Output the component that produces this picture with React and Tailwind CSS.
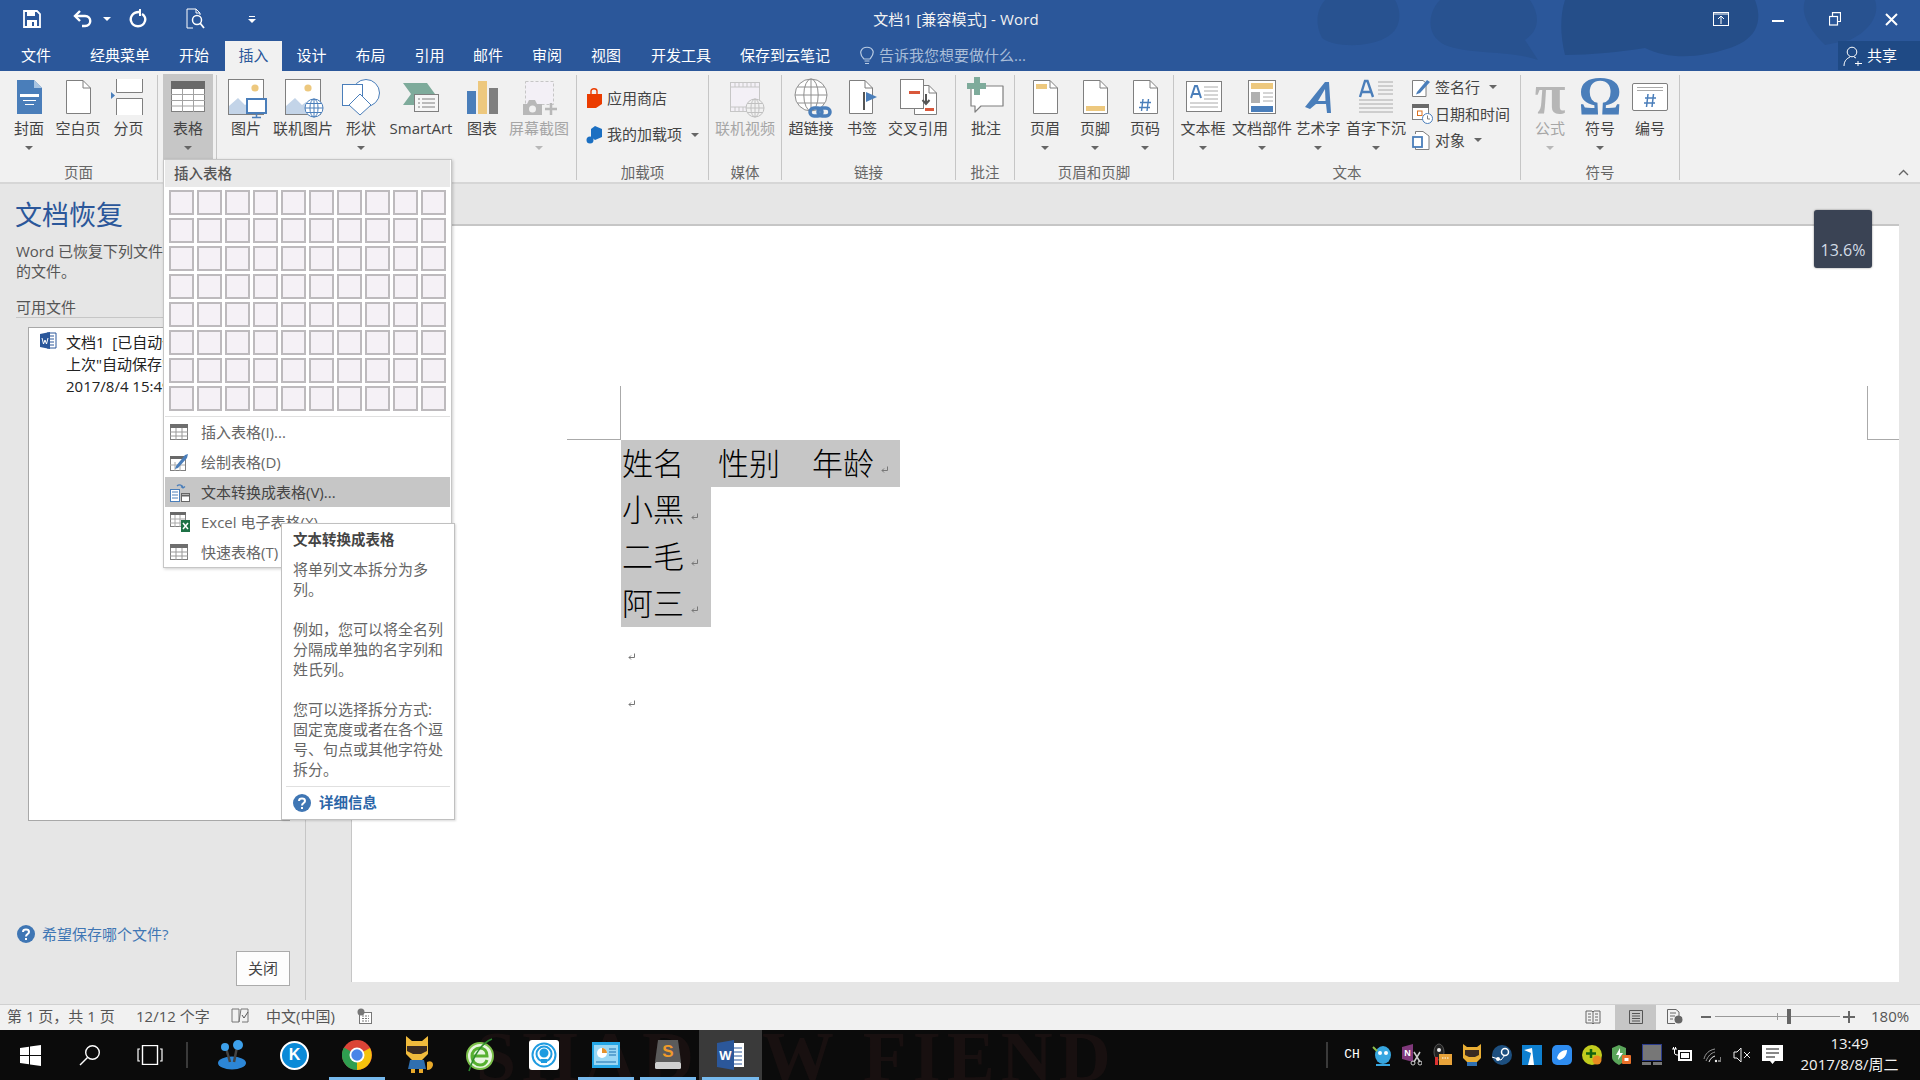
import React from "react";

const B = "#4a7eba", G = "#7f7f7f", Y = "#edc87e", T = "#7eab9b", R = "#d9583b";

function Ico({ w = 44, h = 42, children, className = "" }) {
  return <svg width={w} height={h} viewBox={`0 0 ${w} ${h}`} className={`shrink-0 overflow-visible ${className}`}>{children}</svg>;
}
const Page = ({ x = 10, y = 3, w = 25, h = 34, fill = "#fff", s = G }) => (
  <g>
    <path d={`M${x + .5} ${y + .5}H${x + w - 8}L${x + w - .5} ${y + 8}V${y + h - .5}H${x + .5}Z`} fill={fill} stroke={s} />
    <path d={`M${x + w - 8} ${y + .5}V${y + 8}H${x + w - .5}`} fill="none" stroke={s} />
  </g>
);
const Globe = ({ cx, cy, r, c = B, f = "#fff" }) => (
  <g fill={f} stroke={c} strokeWidth="1">
    <circle cx={cx} cy={cy} r={r} />
    <ellipse cx={cx} cy={cy} rx={r * .45} ry={r} fill="none" />
    <path d={`M${cx - r} ${cy}H${cx + r}M${cx} ${cy - r}V${cy + r}M${cx - r * .85} ${cy - r * .5}H${cx + r * .85}M${cx - r * .85} ${cy + r * .5}H${cx + r * .85}`} fill="none" />
  </g>
);
const TableSm = ({ w = 18, h = 16, dark = "#6e6e6e" }) => (
  <svg width={w} height={h} viewBox="0 0 18 16" className="shrink-0">
    <rect x=".5" y=".5" width="17" height="15" fill="#fff" stroke={G} />
    <rect x="0" y="0" width="18" height="4" fill={dark} />
    <path d="M6 4V16M12 4V16M0 8H18M0 12H18" stroke="#999" />
  </svg>
);

const I = {
  cover: <Ico><path d="M10 3H27L35 11V37H10Z" fill={B} /><path d="M27 3V11H35Z" fill="#a8c4e2" /><path d="M13 17H32V20H13ZM16 23H29V24H16ZM18 27H27V28H18Z" fill="#fff" /></Ico>,
  blank: <Ico><Page /></Ico>,
  pagebreak: <Ico><path d="M9.5 2V15.5H35.5V2M9.5 38V21.5H35.5V38" fill="#fff" stroke={G} /><path d="M4 15V22L8 18.5Z" fill={B} /></Ico>,
  table: <Ico><rect x="5.5" y="4.5" width="33" height="30" fill="#fff" stroke={G} /><rect x="5" y="4" width="34" height="8" fill="#696969" /><path d="M16.5 12V35M27.5 12V35M5 17.5H39M5 23.5H39M5 29H39" stroke="#a2a2a2" /></Ico>,
  pic: <Ico><rect x="4.5" y="2.5" width="35" height="35" fill="#fff" stroke={G} /><circle cx="31" cy="11" r="3.6" fill={Y} /><path d="M5 37V29L14 21L21 28L25 25V37Z" fill="#c3d4e8" /><rect x="23" y="22" width="19" height="14" fill="#fff" stroke={B} strokeWidth="2" /><path d="M32.5 36V40M28 40.5H37" stroke={B} strokeWidth="1.5" /></Ico>,
  online: <Ico><rect x="4.5" y="2.5" width="35" height="35" fill="#fff" stroke={G} /><circle cx="27" cy="11" r="3.6" fill={Y} /><path d="M5 37V29L14 21L21 28L25 25V37Z" fill="#c3d4e8" /><Globe cx={33} cy={31} r={9} /></Ico>,
  shapes: <Ico><circle cx="27" cy="16" r="13.5" fill="#fff" stroke={B} /><rect x="3.5" y="7.5" width="20" height="21" fill="#fff" stroke={B} /><path d="M21 17L32 28L21 38L10 28Z" fill="#fff" stroke={B} /></Ico>,
  smart: <Ico><path d="M4 6H28L36 17L28 28H4L12 17Z" fill={T} /><rect x="15.5" y="17.5" width="24" height="17" fill="#f6f6f6" stroke={G} /><path d="M19 22H21M23 22H36M19 26H21M23 26H36M19 30H21M23 30H36" stroke={G} /></Ico>,
  chart: <Ico><rect x="7" y="14" width="9" height="23" fill={B} /><rect x="18" y="4" width="9" height="33" fill={Y} /><rect x="29" y="11" width="9" height="26" fill={G} /></Ico>,
  shot: <Ico><rect x="8.5" y="4.5" width="28" height="23" fill="#f3f0f6" stroke="#c6c6c6" strokeDasharray="3 2" /><path d="M6 27H10L12 23H18L20 27H25V38H6Z" fill="#b8b8b8" /><circle cx="15.5" cy="32" r="3.5" fill="#f1f1f1" /><path d="M34 26V38M28 32H40" stroke="#b8b8b8" strokeWidth="2.5" /></Ico>,
  video: <Ico><rect x="7.5" y="5.5" width="29" height="29" fill="#f3f0f6" stroke="#c6c6c6" /><path d="M8 10H36M8 30H36M12 6V10M16 6V10M20 6V10M24 6V10M28 6V10M32 6V10M12 30V34M16 30V34M20 30V34" stroke="#c6c6c6" /><Globe cx={32} cy={31} r={9} c="#c0c0c0" f="#f1f1f1" /></Ico>,
  link: <Ico><Globe cx={22} cy={18} r={16} c="#909090" /><g fill="none" stroke={B} strokeWidth="3.5"><rect x="21" y="31" width="12" height="8" rx="4" /><rect x="29" y="31" width="12" height="8" rx="4" /></g></Ico>,
  bookmark: <Ico><Page x={9} y={3} w={24} h={34} /><rect x="23" y="15" width="2" height="18" fill="#555" /><path d="M26 15V25L37 20Z" fill={B} /></Ico>,
  cross: <Ico><Page x={18} y={8} w={23} h={30} /><rect x="4.5" y="2.5" width="23" height="29" fill="#fff" stroke={G} /><rect x="13" y="14" width="11" height="3" fill={R} /><rect x="29" y="31" width="9" height="3" fill={R} /><path d="M30 17V26M26.5 23L30 27L33.5 23" fill="none" stroke="#555" strokeWidth="2" /></Ico>,
  comment: <Ico><path d="M7 9H39V29H17L11 35V29H7Z" fill="#fff" stroke={G} strokeWidth="1.2" strokeLinejoin="round" /><path d="M10 0H16V6H22V12H16V18H10V12H3V6H10Z" fill={T} /></Ico>,
  header: <Ico><Page /><rect x="13" y="7" width="11" height="5" fill={Y} /></Ico>,
  footer: <Ico><Page /><rect x="13" y="29" width="19" height="5" fill={Y} /></Ico>,
  pagenum: <Ico><Page /><path d="M20 22L18.5 34M25.500 22L24 34M17 25.500H28M16 30.500H27" stroke={B} strokeWidth="1.400" fill="none" /></Ico>,
  textbox: <Ico><rect x="5.500" y="4.500" width="35" height="30" fill="#fff" stroke={G} /><path d="M10 21L14 9H16L20 21M11.500 17H18.500" fill="none" stroke={B} strokeWidth="2" /><path d="M23 10H37M23 14H37M23 18H37M23 22H37M9 26H37M9 30H37" stroke="#aaa" /></Ico>,
  parts: <Ico><rect x="8.500" y="3.500" width="27" height="33" fill="#fff" stroke={G} /><rect x="11" y="6" width="22" height="6" fill={Y} /><rect x="11" y="15" width="9" height="11" fill="#b0b0b0" /><path d="M23 16H33M23 20H33M23 24H33" stroke="#aaa" /><rect x="11" y="29" width="22" height="6" fill={B} /></Ico>,
  wordart: <Ico><path d="M9 30L29 5H33L35 36H31L30 27H20L14 32Z" fill={B} /><path d="M22 24H29.500L29 12Z" fill="#f1f1f1" /></Ico>,
  dropcap: <Ico><path d="M6 20L11 4H13.500L19 20M8 15H17" fill="none" stroke={B} strokeWidth="2.400" /><path d="M24 5H39M24 9H39M24 13H39M24 17H39M5 23H39M5 27H39M5 31H39M5 35H39" stroke="#aaa" /></Ico>,
  pi: <Ico><text x="22" y="36" textAnchor="middle" fontSize="56" fontWeight="700" fontFamily="Liberation Serif" fill="#b6b6b6">π</text></Ico>,
  omega: <Ico><text x="22" y="37" textAnchor="middle" fontSize="54" fontWeight="700" fontFamily="Liberation Serif" fill={B}>Ω</text></Ico>,
  numbering: <Ico><rect x="4.500" y="6.500" width="35" height="27" rx="1.500" fill="#fff" stroke={G} /><path d="M9 10.500H35M9 13.500H35" stroke="#aaa" /><path d="M20 17L18.500 30M25.500 17L24 30M17 21H28M16 26H27" stroke={B} strokeWidth="1.500" fill="none" /></Ico>,
};

const Chev = ({ c = "#666" }) => <span className="block w-0 h-0 border-x-[4px] border-x-transparent border-t-[4px]" style={{ borderTopColor: c }} />;

function Big({ w, icon, label, caret, off, active }) {
  return (
    <div className={`${w} flex flex-col items-center shrink-0 ${active ? "bg-[#c6c6c6] h-[85px] pt-[3px] -mt-[1px]" : "h-[81px] pt-[2px]"}`}>
      <div className="h-[42px] flex items-center justify-center">{icon}</div>
      <div className={`h-[20px] -mt-[1px] leading-[20px] text-[15px] whitespace-nowrap ${off ? "text-[#a6a6a6]" : "text-[#444]"}`}>{label}</div>
      {caret && <div className="h-[16px] mt-[2px] flex items-center justify-center"><Chev c={off ? "#b8b8b8" : "#666"} /></div>}
    </div>
  );
}

function Group({ w, pl = "", label, children }) {
  return (
    <div className={`${w} h-[105px] my-[4px] border-r border-[#c6c6c6] flex flex-col shrink-0`}>
      <div className={`flex h-[90px] ${pl}`}>{children}</div>
      <div className="h-[15px] leading-[16px] text-[14.500px] text-center text-[#666] whitespace-nowrap">{label}</div>
    </div>
  );
}

function Small({ icon, label, caret, ml }) {
  return (
    <div className="h-[26.500px] flex items-center">
      <div className="w-[23px] flex justify-start">{icon}</div>
      <span className="text-[15px] leading-[20px] text-[#444] whitespace-nowrap">{label}</span>
      {caret && <span className={ml}><Chev /></span>}
    </div>
  );
}

function Tab({ w, label, active, extra = "" }) {
  return <div className={`${w} h-[30px] leading-[29px] text-center text-[15px] whitespace-nowrap shrink-0 ${extra} ${active ? "bg-[#f1f1f1] text-[#2b579a]" : "text-white"}`}>{label}</div>;
}

function MenuItem({ icon, label, hi }) {
  return (
    <div className={`h-[30px] flex items-center ${hi ? "bg-[#c6c6c6] text-[#444]" : "text-[#666]"}`}>
      <div className="w-[36px] pl-[5px] flex">{icon}</div>
      <span className="text-[15px] whitespace-nowrap leading-[20px]">{label}</span>
    </div>
  );
}

const Ret = ({ className = "" }) => (
  <svg width="8" height="8" viewBox="0 0 8 8" className={className}><path d="M6.500 .5V4.500H1M3 2.500L1 4.500L3 6.500" fill="none" stroke="#777" /></svg>
);

const Help = () => (
  <svg width="18" height="18" viewBox="0 0 18 18" className="shrink-0"><circle cx="9" cy="9" r="9" fill="#3f76b4" /><path d="M6 7C6 3.800 12 3.800 12 7C12 9 9 9 9 11.500" fill="none" stroke="#fff" strokeWidth="2" /><rect x="8" y="13" width="2" height="2" fill="#fff" /></svg>
);

const hdr = ["将单列文本拆分为多", "列。"];
const rows = [0, 1, 2, 3, 4, 5, 6, 7];
const cols = [0, 1, 2, 3, 4, 5, 6, 7, 8, 9];

function Tb({ active, on, children }) {
  return (
    <div className={`relative w-[62.300px] h-[50px] flex items-center justify-center shrink-0 ${active ? "bg-[#3a3a3a]" : ""}`}>
      {children}
      {on && <div className="absolute bottom-0 left-[5%] right-[5%] h-[3px] bg-[#76b9ed]" />}
    </div>
  );
}
const Tr = ({ children, w = "w-[30px]" }) => <div className={`${w} flex items-center justify-center shrink-0`}>{children}</div>;

export default function App() {
  return (
    <div className="relative w-[1920px] h-[1080px] overflow-hidden flex flex-col bg-[#e6e6e6] font-['Open_Sans','Noto_Sans_CJK_SC',sans-serif]">
      {/* Title and tabs */}
      <div className="relative h-[71px] bg-[#2b579a] shrink-0">
        <svg className="absolute left-0 top-0" width="1920" height="65" viewBox="0 0 1920 65">
          <g fill="#285290">
            <path d="M1325 0H1395C1402 12 1402 30 1385 38C1370 47 1335 48 1322 38C1315 25 1316 10 1325 0Z" />
            <path d="M1440 0H1530C1540 15 1540 30 1525 40L1538 60C1510 50 1470 55 1445 45C1425 35 1428 12 1440 0Z" />
            <path d="M1565 0H1755C1762 18 1760 38 1730 48C1700 58 1670 60 1645 48C1620 52 1590 55 1565 55C1560 35 1560 15 1565 0Z" fill="#254e89" />
            <path d="M1805 0H1875C1880 15 1870 30 1850 40L1825 45C1810 30 1800 15 1805 0Z" />
          </g>
        </svg>
        <div className="relative h-[41px] flex items-center pb-[3px]">
          <div className="w-[270px] relative h-full flex items-center shrink-0 text-white">
            <div className="w-[66px] flex justify-center">
              <svg width="18" height="18" viewBox="0 0 18 18"><path d="M1 1H14L17 4V17H1Z" fill="none" stroke="#fff" strokeWidth="1.800" /><rect x="4" y="1" width="8" height="5" fill="#fff" /><rect x="4" y="10" width="10" height="7" fill="#fff" /><rect x="9" y="12" width="2" height="4" fill="#2b579a" /></svg>
            </div>
            <div className="w-[40px] flex justify-center">
              <svg width="20" height="18" viewBox="0 0 20 18"><path d="M3 6H12C19 6 19 16 12 16H9" fill="none" stroke="#fff" strokeWidth="2.400" /><path d="M7 1L2 6L7 11" fill="none" stroke="#fff" strokeWidth="2.400" /></svg>
            </div>
            <div className="w-[10px] flex justify-center"><Chev c="#fff" /></div>
            <div className="w-[42px] flex justify-center ml-[7px]">
              <svg width="18" height="20" viewBox="0 0 18 20"><path d="M10 3C3 3 1 9 2 12C4 19 14 19 16 12C17 9 15 6 13 5" fill="none" stroke="#fff" strokeWidth="2.400" /><path d="M12 0V7H10V0Z" fill="#fff" /></svg>
            </div>
            <div className="w-[78px] flex justify-center">
              <svg width="20" height="22" viewBox="0 0 20 22"><path d="M7 20H1V1H10L14 5V7" fill="none" stroke="#fff" /><path d="M10 1V5H14" fill="none" stroke="#fff" /><circle cx="11" cy="12" r="4.500" fill="none" stroke="#fff" strokeWidth="1.500" /><path d="M14 15L18 20" stroke="#fff" strokeWidth="1.800" /></svg>
            </div>
            <div className="w-[38px] flex flex-col items-center gap-[2px]"><div className="w-[6px] h-[1px] bg-white" /><Chev c="#fff" /></div>
          </div>
          <div className="w-[1372px] text-center text-[15px] leading-[20px] tracking-[0.15px] text-[#f2f2f2] shrink-0 whitespace-nowrap">文档1 [兼容模式] - Word</div>
          <div className="absolute right-0 top-0 h-[38px] flex">
            <div className="w-[57px] flex items-center justify-center"><svg width="16" height="14" viewBox="0 0 16 14"><rect x=".5" y=".5" width="15" height="13" fill="none" stroke="#fff" /><path d="M1 2H15M8 12V5M5 7L8 4L11 7" fill="none" stroke="#fff" /></svg></div>
            <div className="w-[57px] flex items-center justify-center"><div className="w-[12px] h-[2px] bg-white mt-[4px]" /></div>
            <div className="w-[57px] flex items-center justify-center"><svg width="12" height="14" viewBox="0 0 12 14"><rect x=".5" y="4.500" width="8" height="8.500" fill="#2b579a" stroke="#fff" strokeWidth="1.200" /><path d="M3.500 4V.7H11.500V9.500H9" fill="none" stroke="#fff" strokeWidth="1.200" /></svg></div>
            <div className="w-[57px] flex items-center justify-center"><svg width="13" height="13" viewBox="0 0 13 13"><path d="M1 1L12 12M12 1L1 12" stroke="#fff" strokeWidth="2" /></svg></div>
          </div>
        </div>
        <div className="relative h-[30px] flex">
          <Tab w="w-[72px]" label="文件" />
          <Tab w="w-[96px]" label="经典菜单" />
          <Tab w="w-[57px]" extra="pr-[5px]" label="开始" />
          <Tab w="w-[57px]" label="插入" active />
          <Tab w="w-[59px]" label="设计" />
          <Tab w="w-[59px]" label="布局" />
          <Tab w="w-[59px]" label="引用" />
          <Tab w="w-[58px]" label="邮件" />
          <Tab w="w-[60px]" label="审阅" />
          <Tab w="w-[58px]" label="视图" />
          <Tab w="w-[92px]" label="开发工具" />
          <Tab w="w-[116px]" label="保存到云笔记" />
          <div className="flex items-center pb-[1px] ml-[17px] text-[15px] text-[#a9bdd8] whitespace-nowrap">
            <svg width="14" height="20" viewBox="0 0 14 20" className="mr-[5px]"><path d="M4 13C1 10 0 8 1 5C3 0 11 0 13 5C14 8 12 10 10 13ZM4.500 15H9.500M5 17.500H9" fill="none" stroke="#b9cbe2" strokeWidth="1.200" /></svg>
            告诉我您想要做什么...
          </div>
          <div className="absolute right-0 top-0 w-[82px] h-[29px] bg-[#1f4a85] flex items-center text-white text-[15px]">
            <svg width="20" height="20" viewBox="0 0 20 20" className="ml-[5px] mr-[4px]"><circle cx="9" cy="6" r="4.800" fill="none" stroke="#fff" /><path d="M1 20C1 14 5 12 7 11M11 11L13 12M15 15V20M12 17.500H19" fill="none" stroke="#fff" /></svg>
            共享
          </div>
        </div>
      </div>

      {/* Ribbon */}
      <div className="relative h-[113px] bg-[#f1f1f1] border-b-2 border-[#d6d6d6] flex shrink-0">
        <Group w="w-[158px]" pl="pl-[5px]" label="页面">
          <Big w="w-[48px]" icon={I.cover} label="封面" caret />
          <Big w="w-[50px]" icon={I.blank} label="空白页" />
          <Big w="w-[51px]" icon={I.pagebreak} label="分页" />
        </Group>
        <div className="w-[59px] h-[105px] my-[4px] border-r border-[#c6c6c6] flex shrink-0 pl-[5px]">
          <Big w="w-[50px]" icon={I.table} label="表格" caret active />
        </div>
        <Group w="w-[360px]" pl="pl-[5px]" label="">
          <Big w="w-[48px]" icon={I.pic} label="图片" />
          <Big w="w-[66px]" icon={I.online} label="联机图片" />
          <Big w="w-[50px]" icon={I.shapes} label="形状" caret />
          <Big w="w-[70px]" icon={I.smart} label="SmartArt" />
          <Big w="w-[52px]" icon={I.chart} label="图表" />
          <Big w="w-[62px]" icon={I.shot} label="屏幕截图" caret off />
        </Group>
        <Group w="w-[132px]" label="加载项">
          <div className="flex flex-col pt-[5px] pl-[9px]">
            <div className="h-[36px] flex items-center text-[15px] text-[#444] whitespace-nowrap">
              <svg width="17" height="20" viewBox="0 0 17 20" className="mr-[4px]"><path d="M1 6H16V16L10 20H1Z" fill="#eb3c00" /><path d="M5 6V3C5 0 11 0 11 3V6" fill="none" stroke="#eb3c00" strokeWidth="1.400" /></svg>
              应用商店
            </div>
            <div className="h-[37px] flex items-center text-[15px] text-[#444] whitespace-nowrap">
              <svg width="17" height="18" viewBox="0 0 17 18" className="mr-[4px]"><path d="M9 0L16 3V11L9 14L5 11V3Z" fill="#1b6fc2" /><circle cx="4" cy="14" r="3.500" fill="#1b6fc2" /></svg>
              我的加载项
              <span className="ml-[9px]"><Chev /></span>
            </div>
          </div>
        </Group>
        <Group w="w-[73px]" pl="pl-[3px]" label="媒体">
          <Big w="w-[66px]" icon={I.video} label="联机视频" off />
        </Group>
        <Group w="w-[174px]" label="链接">
          <Big w="w-[58px]" icon={I.link} label="超链接" />
          <Big w="w-[44px]" icon={I.bookmark} label="书签" />
          <Big w="w-[68px]" icon={I.cross} label="交叉引用" />
        </Group>
        <Group w="w-[59px]" pl="pl-[2px]" label="批注">
          <Big w="w-[56px]" icon={I.comment} label="批注" />
        </Group>
        <Group w="w-[159px]" pl="pl-[5px]" label="页眉和页脚">
          <Big w="w-[50px]" icon={I.header} label="页眉" caret />
          <Big w="w-[50px]" icon={I.footer} label="页脚" caret />
          <Big w="w-[50px]" icon={I.pagenum} label="页码" caret />
        </Group>
        <Group w="w-[347px]" pl="pl-[1px]" label="文本">
          <Big w="w-[56px]" icon={I.textbox} label="文本框" caret />
          <Big w="w-[62px]" icon={I.parts} label="文档部件" caret />
          <Big w="w-[50px]" icon={I.wordart} label="艺术字" caret />
          <Big w="w-[66px]" icon={I.dropcap} label="首字下沉" caret />
          <div className="flex flex-col pl-[3px] -mt-[1px]">
            <Small label="签名行" caret ml="ml-[9px]" icon={<svg width="19" height="19" viewBox="0 0 19 19"><path d="M.5 2.500H11L14 5V18.500H.5Z" fill="#fff" stroke={G} /><path d="M5 14L15 2L18 4L8 15L4 16.500Z" fill={B} /></svg>} />
            <Small label="日期和时间" icon={<svg width="21" height="20" viewBox="0 0 21 20"><rect x=".5" y=".5" width="16" height="15" fill="#fff" stroke={G} /><rect width="17" height="4" fill="#696969" /><rect x="5.500" y="7" width="4.500" height="4.500" fill="none" stroke="#d9701f" /><circle cx="15.500" cy="14.500" r="5" fill="#fff" stroke={B} /><path d="M15.500 11.500V15H18" fill="none" stroke={G} /></svg>} />
            <Small label="对象" caret ml="ml-[9px]" icon={<svg width="18" height="19" viewBox="0 0 18 19"><path d="M3.500 3V.5H11L17 5V18.500H3.500V16" fill="#fff" stroke={G} /><rect x="1" y="6" width="9" height="10" fill="#fff" stroke={B} strokeWidth="1.800" /></svg>} />
          </div>
        </Group>
        <Group w="w-[159px]" pl="pl-[4px]" label="符号">
          <Big w="w-[50px]" icon={I.pi} label="公式" caret off />
          <Big w="w-[50px]" icon={I.omega} label="符号" caret />
          <Big w="w-[50px]" icon={I.numbering} label="编号" />
        </Group>
        <div className="flex-1 flex items-end justify-end pr-[11px] pb-[6px]">
          <svg width="11" height="7" viewBox="0 0 11 7"><path d="M1 6L5.500 1.500L10 6" fill="none" stroke="#666" strokeWidth="1.400" /></svg>
        </div>
      </div>

      {/* Main */}
      <div className="relative flex h-[820px] shrink-0 bg-[#e6e6e6]">
        <div className="w-[306px] h-[816px] border-r border-[#c6c6c6] pt-[11px] shrink-0">
          <div className="pl-[15px] h-[40px] leading-[40px] text-[27px] text-[#2b579a] whitespace-nowrap">文档恢复</div>
          <div className="pl-[16px] mt-[6px] text-[15px] leading-[20px] text-[#555] whitespace-nowrap">Word 已恢复下列文件，您可以保存</div>
          <div className="pl-[16px] text-[15px] leading-[20px] text-[#555] whitespace-nowrap">的文件。</div>
          <div className="ml-[16px] mr-[10px] mt-[16px] h-[21px] leading-[20px] text-[15px] text-[#555] border-b border-[#c6c6c6]">可用文件</div>
          <div className="ml-[28px] mt-[9px] w-[262px] h-[494px] bg-white border border-[#a8a8a8] pt-[3px] pl-[11px] flex overflow-hidden">
            <svg width="17" height="17" viewBox="0 0 17 17" className="shrink-0 mt-[1px]"><path d="M7 1H16V16H7Z" fill="#fff" stroke="#2b579a" /><path d="M9 4H14M9 7H14M9 10H14M9 13H14" stroke="#2b579a" /><path d="M0 2L10 0V17L0 15Z" fill="#2b579a" /><path d="M2 6L3.500 12L5 8L6.500 12L8 6" fill="none" stroke="#fff" /></svg>
            <div className="ml-[9px] text-[15px] leading-[22px] text-[#222] whitespace-pre">
              <div>{"文档1  [已自动保存]"}</div>
              <div>上次"自动保存"时间</div>
              <div>2017/8/4 15:49</div>
            </div>
          </div>
          <div className="flex items-center h-[20px] mt-[103px] ml-[17px] text-[15px] text-[#3f76b4] whitespace-nowrap">
            <Help /><span className="ml-[7px]">希望保存哪个文件?</span>
          </div>
          <div className="ml-[236px] mt-[7px] w-[54px] h-[35px] bg-[#fdfdfd] border border-[#ababab] text-[15px] text-[#444] flex items-center justify-center">关闭</div>
        </div>
        <div className="flex-1 pl-[45px] pr-[21px] pt-[40px] pb-[22px]">
          <div className="relative w-full h-full bg-white border-t-2 border-l border-[#c6c6c6] pt-[214px] pl-[269px]">
            <div className="absolute left-[268px] top-[160px] w-px h-[54px] bg-[#aaa]" />
            <div className="absolute left-[215px] top-[213px] w-[54px] h-px bg-[#aaa]" />
            <div className="absolute left-[1515px] top-[160px] w-px h-[54px] bg-[#aaa]" />
            <div className="absolute left-[1515px] top-[213px] w-[32px] h-px bg-[#aaa]" />
            <div className="font-['Noto_Sans_CJK_SC',sans-serif] font-light text-[31px] text-black leading-[46.700px]">
              <div className="w-[279px] h-[46.700px] bg-[#c6c6c6] flex items-center pl-[1px] pb-[3px]">
                <span className="w-[96px]">姓名</span><span className="w-[94px]">性别</span><span>年龄</span><Ret className="ml-[7px] mt-[16px]" />
              </div>
              {["小黑", "二毛", "阿三"].map((t) => (
                <div key={t} className="w-[90px] h-[46.700px] bg-[#c6c6c6] flex items-center pl-[1px] pb-[3px]"><span>{t}</span><Ret className="ml-[7px] mt-[16px]" /></div>
              ))}
              <div className="h-[46.700px] flex items-center pl-[7px]"><Ret className="mt-[14px]" /></div>
              <div className="h-[46.700px] flex items-center pl-[7px]"><Ret className="mt-[14px]" /></div>
            </div>
          </div>
        </div>
      </div>

      {/* Status bar */}
      <div className="relative h-[26px] bg-[#f1f1f1] flex items-center text-[15px] text-[#555] border-t border-[#d0d0d0] shrink-0 whitespace-nowrap pl-[7px]">
        <div className="flex items-center h-full pb-[3px]">
          <div className="w-[129px]">第 1 页，共 1 页</div>
          <div className="w-[95px]">12/12 个字</div>
          <div className="w-[35px] flex">
            <svg width="18" height="16" viewBox="0 0 18 16"><path d="M1 1H8V14H1ZM8 14L10 1H17V14H11" fill="none" stroke="#777" /><path d="M11 7L13 10L17 4" fill="none" stroke="#555" /></svg>
          </div>
          <div className="w-[91px]">中文(中国)</div>
          <svg width="15" height="16" viewBox="0 0 15 16"><rect x="2.500" y="4.500" width="12" height="11" fill="#fff" stroke="#777" /><path d="M5 8H12M5 10.500H12M5 13H12" stroke="#777" strokeDasharray="2 1" /><circle cx="4" cy="4" r="3.500" fill="#777" /></svg>
        </div>
        <div className="ml-auto h-full flex items-center pr-[9px] pb-[2px]">
          <svg width="20" height="14" viewBox="0 0 20 14"><path d="M3 1H9L10 2L11 1H17V13H11L10 14L9 13H3ZM10 2V13M5 4H8M5 7H8M5 10H8M12 4H15M12 7H15M12 10H15" fill="none" stroke="#666" /></svg>
          <div className="ml-[12px] w-[41px] self-stretch -mb-[2px] pb-[2px] bg-[#c6c6c6] flex items-center justify-center">
            <svg width="14" height="14" viewBox="0 0 14 14"><path d="M.5 .5H13.500V13.500H.5ZM3 3.500H11M3 6H11M3 8.500H11M3 11H11" fill="none" stroke="#555" /></svg>
          </div>
          <div className="ml-[9px] w-[20px] flex justify-center">
            <svg width="16" height="15" viewBox="0 0 16 15"><path d="M.5 .5H9L12 3V7M8 14.500H.5V.5M3 4H9M3 7H8M3 10H6" fill="none" stroke="#666" /><circle cx="11.500" cy="10.500" r="4" fill="#666" /></svg>
          </div>
          <div className="ml-[16px] w-[10px] h-[2px] bg-[#666]" />
          <div className="relative ml-[4px] w-[125px] h-[1px] bg-[#999]">
            <div className="absolute left-[62px] top-[-3px] w-px h-[7px] bg-[#999]" />
            <div className="absolute left-[72px] top-[-7px] w-[4px] h-[15px] bg-[#666]" />
          </div>
          <div className="relative ml-[3px] w-[12px] h-[12px]">
            <div className="absolute left-0 top-[5px] w-[12px] h-[2px] bg-[#666]" />
            <div className="absolute left-[5px] top-0 w-[2px] h-[12px] bg-[#666]" />
          </div>
          <div className="ml-[16px] w-[40px] text-[15px] text-[#555]">180%</div>
        </div>
      </div>

      {/* Taskbar */}
      <div className="relative flex-1 bg-[#0b0b0b] flex text-white overflow-hidden">
        <div className="absolute left-[476px] top-[-13px] text-[72px] leading-[80px] font-['Liberation_Serif',serif] font-bold text-[#181010] whitespace-nowrap tracking-[6px]">SHADOW FIEND</div>
        <div className="relative flex items-center">
          <div className="w-[60px] flex justify-center">
            <svg width="21" height="21" viewBox="0 0 21 21" fill="#fff"><path d="M0 3L9 1.700V10H0ZM10 1.500L21 0V10H10ZM0 11H9V19.300L0 18ZM10 11H21V21L10 19.500Z" /></svg>
          </div>
          <div className="w-[59px] flex justify-center">
            <svg width="22" height="22" viewBox="0 0 22 22" fill="none" stroke="#fff" strokeWidth="1.400"><circle cx="13.500" cy="8.500" r="6.800" /><path d="M8.500 13.500L1 21" /></svg>
          </div>
          <div className="w-[62px] flex justify-center">
            <svg width="26" height="20" viewBox="0 0 26 20" fill="none" stroke="#fff" strokeWidth="1.200"><rect x="5.500" y=".5" width="15" height="19" strokeWidth="1.400" /><path d="M3 4H1V16H3M23 4H25V16H23" /></svg>
          </div>
          <div className="w-[2px] h-[26px] bg-[#3a3a3a] ml-[5px] mr-[13px]" />
          <Tb><svg width="30" height="30" viewBox="0 0 30 30"><ellipse cx="15" cy="23" rx="14" ry="6.500" fill="#2c86d6" /><path d="M9 8L13 22M20 7L17 22" stroke="#444" strokeWidth="2.500" /><circle cx="8" cy="7" r="4" fill="#3da0ea" /><circle cx="21" cy="5" r="5" fill="#3da0ea" /></svg></Tb>
          <Tb><div className="w-[29px] h-[29px] rounded-full bg-[#0a8ad8] border-[2px] border-white flex items-center justify-center text-[16px] font-bold text-white font-['Liberation_Sans',sans-serif]">K</div></Tb>
          <Tb on>
            <svg width="30" height="30" viewBox="0 0 30 30"><circle cx="15" cy="15" r="15" fill="#db4437" /><path d="M15 15L28 8A15 15 0 0 1 15 30Z" fill="#f4c20d" /><path d="M15 15L15 30A15 15 0 0 1 2 7.500Z" fill="#2f9e50" /><circle cx="15" cy="15" r="7.500" fill="#fff" /><circle cx="15" cy="15" r="5.700" fill="#4a85e8" /></svg>
          </Tb>
          <Tb><svg width="32" height="38" viewBox="0 0 32 38"><path d="M24 26C32 22 32 34 24 34Z" fill="#e8a92a" /><path d="M3 0L9 5H19L25 0V18L19 24H9L3 18Z" fill="#f1bb3c" /><path d="M4 10H24V15L18 18H10L4 15Z" fill="#3a2b22" /><path d="M7 24H21L23 33H5Z" fill="#2f6fb0" /><path d="M8 33V37H12V33M16 33V37H20V33" fill="#e8a92a" /></svg></Tb>
          <Tb><svg width="30" height="36" viewBox="0 0 30 36"><circle cx="14" cy="19" r="13" fill="#e8f5e0" stroke="#7cc04a" strokeWidth="2" /><path d="M7 19H21C21 14 18 11 14 11C9 11 6 15 6 19C6 25 10 28 14 28C17 28 20 26 21 23" fill="none" stroke="#57b130" strokeWidth="3" /><path d="M3 34C8 18 16 6 26 2" fill="none" stroke="#2e8b2e" strokeWidth="1.500" /></svg></Tb>
          <Tb><div className="w-[30px] h-[30px] bg-white rounded-[3px] flex items-center justify-center"><svg width="26" height="26" viewBox="0 0 26 26" fill="none" stroke="#1e9be0" strokeWidth="2"><circle cx="13" cy="13" r="11.500" /><circle cx="13" cy="12" r="7.500" /><circle cx="13" cy="11" r="3.500" fill="#1e9be0" /><path d="M10 17H16V21H10Z" fill="#1e9be0" stroke="none" /></svg></div></Tb>
          <Tb on><svg width="28" height="26" viewBox="0 0 28 26"><rect width="28" height="26" fill="#24a6e6" /><rect x="2" y="3" width="24" height="20" fill="#9ad7f4" /><circle cx="10" cy="11" r="5" fill="#fff" /><path d="M10 11V6A5 5 0 0 1 15 11Z" fill="#e5912c" /><path d="M17 7H24M17 10H24M17 13H24M4 20H24" stroke="#1a70b0" /></svg></Tb>
          <Tb on><svg width="28" height="30" viewBox="0 0 28 30"><path d="M4 0H24L27 22H1Z" fill="#5b5b5b" /><rect x="1" y="22" width="26" height="7" rx="1.500" fill="#d0d0d0" /><text x="14" y="17" textAnchor="middle" fontSize="17" fontWeight="700" fontFamily="Liberation Sans" fill="#f09a2a">S</text></svg></Tb>
          <Tb active on><svg width="28" height="30" viewBox="0 0 28 30"><path d="M12 3H27V27H12Z" fill="#fff" /><path d="M15 8H25M15 12H25M15 16H25M15 20H25M15 24H25" stroke="#2b579a" /><path d="M0 3L17 0V30L0 27Z" fill="#2b579a" /><text x="8.500" y="20" textAnchor="middle" fontSize="13" fontWeight="700" fontFamily="Liberation Sans" fill="#fff">W</text></svg></Tb>
        </div>
        <div className="absolute left-[1326px] top-[12px] w-[2px] h-[26px] bg-[#3a3a3a]" />
        <div className="absolute left-[1337px] top-0 h-[50px] flex items-center">
          <Tr><span className="text-[13px] font-['Liberation_Mono',monospace]">CH</span></Tr>
          <Tr><svg width="20" height="22" viewBox="0 0 20 22"><ellipse cx="11" cy="11" rx="8" ry="9" fill="#37a6e0" /><circle cx="8" cy="9" r="2" fill="#fff" /><circle cx="14" cy="9" r="2" fill="#fff" /><path d="M4 21H18" stroke="#37a6e0" strokeWidth="2" /><path d="M1 3L5 7" stroke="#8fc04a" strokeWidth="2" /></svg></Tr>
          <Tr><svg width="20" height="22" viewBox="0 0 20 22"><path d="M0 3L11 0V18L0 15Z" fill="#80397b" /><text x="5.500" y="12" textAnchor="middle" fontSize="9" fontWeight="700" fontFamily="Liberation Sans" fill="#fff">N</text><path d="M12 8L18 18M18 8L12 18" stroke="#ccc" strokeWidth="1.500" /><circle cx="11" cy="19" r="2" fill="none" stroke="#ccc" /><circle cx="18" cy="19" r="2" fill="none" stroke="#ccc" /></svg></Tr>
          <Tr><svg width="20" height="24" viewBox="0 0 20 24"><ellipse cx="7" cy="9" rx="5" ry="8" fill="#222" stroke="#555" /><circle cx="7" cy="7" r="2" fill="#eee" /><rect x="3" y="14" width="3" height="8" fill="#d33" /><rect x="7" y="11" width="13" height="11" fill="#e8a33a" /><path d="M10 15H17" stroke="#fff" strokeDasharray="1.500 1" /></svg></Tr>
          <Tr><svg width="20" height="22" viewBox="0 0 20 22"><path d="M1 0L5 3H15L19 0V14L15 18H5L1 14Z" fill="#e9ae34" /><path d="M3 6H17V11L13 13H7L3 11Z" fill="#3a2b22" /><rect x="5" y="18" width="10" height="4" fill="#2f6fb0" /></svg></Tr>
          <Tr><svg width="20" height="20" viewBox="0 0 20 20"><circle cx="10" cy="10" r="10" fill="#1d4f7f" /><path d="M0 12L9 15L13 10" stroke="#fff" fill="none" /><circle cx="13" cy="7" r="3.500" fill="none" stroke="#fff" strokeWidth="1.500" /><circle cx="6" cy="14" r="2" fill="#fff" /></svg></Tr>
          <Tr><svg width="20" height="20" viewBox="0 0 20 20"><rect width="20" height="20" fill="#0e7fcf" /><path d="M2 5L10 3L12 20H6L9 8Z" fill="#fff" /></svg></Tr>
          <Tr><svg width="20" height="20" viewBox="0 0 20 20"><rect width="20" height="20" rx="5" fill="#2e8cf0" /><path d="M5 13C6 8 10 5 15 5C15 10 12 14 7 15Z" fill="#fff" /></svg></Tr>
          <Tr><svg width="20" height="20" viewBox="0 0 20 20"><circle cx="10" cy="10" r="10" fill="#c2cc1e" /><path d="M9 4V13M4 8.500H14" stroke="#14620f" strokeWidth="2.500" /><circle cx="15" cy="15" r="4.500" fill="#e98b20" /></svg></Tr>
          <Tr><svg width="20" height="20" viewBox="0 0 20 20"><path d="M0 3L7 0L14 3V12C14 16 10 18 7 20C4 18 0 16 0 12Z" fill="#5aa55a" /><path d="M8 3L4 10H7L6 15L11 8H8Z" fill="#fff" /><rect x="10" y="10" width="9" height="9" rx="1" fill="#e8702a" /><rect x="12.500" y="13" width="4" height="3" fill="#fff" /></svg></Tr>
          <Tr><svg width="20" height="22" viewBox="0 0 20 22"><rect x=".5" y=".5" width="19" height="16" fill="#777" stroke="#2b3c8c" /><rect y="18" width="9" height="3" fill="#777" /><rect x="11" y="18" width="9" height="3" fill="#777" /></svg></Tr>
          <Tr><svg width="20" height="16" viewBox="0 0 20 16"><rect x="6.500" y="3.500" width="13" height="10" fill="#fff" stroke="#fff" /><rect x="8" y="5" width="10" height="7" fill="#111" /><rect x="9" y="6" width="8" height="5" fill="#fff" /><path d="M0 2H5M1.500 0V2M3.500 0V2M2.500 2V6C2.500 8 5 8 6.500 8" fill="none" stroke="#fff" /></svg></Tr>
          <Tr><svg width="18" height="16" viewBox="0 0 18 16" fill="none" stroke="#999"><path d="M1 12C2 7 6 3 12 2M3 14C5 9 8 6 12 5" /><path d="M6 15C7 12 9 10 12 9" stroke="#eee" /><circle cx="13" cy="14" r="1.200" fill="#eee" stroke="none" /><path d="M16 15V13M18 15V10" stroke="#eee" /></svg></Tr>
          <Tr><svg width="18" height="16" viewBox="0 0 18 16" fill="none" stroke="#eee"><path d="M1 5H4L8 1V15L4 11H1Z" /><path d="M11 5L17 11M17 5L11 11" /></svg></Tr>
          <Tr><svg width="21" height="21" viewBox="0 0 21 21"><path d="M0 0H21V16H13L10.500 19L8 16H0Z" fill="#fff" /><path d="M4 4H17M4 8H17M4 12H13" stroke="#111" strokeWidth="1.200" /></svg></Tr>
        </div>
        <div className="absolute left-[1779px] top-0 w-[141px] h-[50px] flex flex-col items-center text-[15px] leading-[21px] pt-[3px] text-[#f2f2f2] whitespace-nowrap">
          <div>13:49</div>
          <div>2017/8/8/周二</div>
        </div>
      </div>

      {/* Insert table menu */}
      <div className="absolute left-[163px] top-[159px] w-[289px] h-[409px] bg-white border border-[#c6c6c6] shadow-[1px_1px_3px_rgba(0,0,0,0.2)] px-px">
        <div className="h-[27px] mt-0 bg-[#e9e9e9] pl-[9px] leading-[27px] text-[14.500px] font-medium text-[#555]">插入表格</div>
        <div className="mt-[3px] ml-[4px] grid grid-cols-[repeat(10,25px)] auto-rows-[25px] gap-[3px]">
          {rows.map((r) => cols.map((c) => <div key={`${r}-${c}`} className="border-2 border-[#bdbabd] bg-[#f5f1f6]" />))}
        </div>
        <div className="mt-[5px] h-px bg-[#e0e0e0]" />
        <MenuItem label="插入表格(I)..." icon={<TableSm />} />
        <MenuItem label="绘制表格(D)" icon={<svg width="19" height="19" viewBox="0 0 19 19"><rect x=".5" y="3.500" width="15" height="14" fill="#fff" stroke={G} /><rect y="3" width="16" height="3" fill="#696969" /><path d="M5 9V18M10 9V18M0 12H15" stroke="#aaa" /><path d="M6 13L15 2L18 1L17 5L8 15L5 16Z" fill={B} /></svg>} />
        <MenuItem hi label="文本转换成表格(V)..." icon={<svg width="20" height="19" viewBox="0 0 20 19"><rect x=".5" y="6.500" width="9" height="12" fill="#fff" stroke={B} /><path d="M2 9H8M2 12H8M2 15H8" stroke={B} /><rect x="11.500" y="10.500" width="8" height="8" fill="#fff" stroke="#666" /><path d="M11 12.500H20" stroke="#666" strokeWidth="2" /><path d="M13 5C13 2 9 1 7 3M13 5L11 3.500M13 5L15 3.500" fill="none" stroke={B} strokeWidth="1.300" /></svg>} />
        <MenuItem label="Excel 电子表格(X)" icon={<svg width="20" height="20" viewBox="0 0 20 20"><rect x=".5" y=".5" width="15" height="14" fill="#fff" stroke={G} /><rect width="16" height="3" fill="#696969" /><path d="M5 3V15M10 3V15M0 7H15M0 11H15" stroke="#aaa" /><rect x="11" y="8" width="9" height="12" fill="#1e7145" /><path d="M13 11L18 17M18 11L13 17" stroke="#fff" strokeWidth="1.500" /></svg>} />
        <MenuItem label="快速表格(T)" icon={<TableSm />} />
      </div>

      {/* Tooltip */}
      <div className="absolute left-[281px] top-[523px] w-[174px] h-[297px] bg-white border border-[#c0c0c0] shadow-[1px_1px_2px_rgba(0,0,0,0.15)] pt-[6px] text-[15px] leading-[20px] text-[#666] whitespace-nowrap">
        <div className="pl-[11px] h-[20px] font-bold text-[14.500px] text-[#444]">文本转换成表格</div>
        <div className="pl-[11px] mt-[9px]">
          {hdr.map((t) => <div key={t}>{t}</div>)}
          <div className="mt-[20px]">例如，您可以将全名列</div>
          <div>分隔成单独的名字列和</div>
          <div>姓氏列。</div>
          <div className="mt-[20px]">您可以选择拆分方式:</div>
          <div>固定宽度或者在各个逗</div>
          <div>号、句点或其他字符处</div>
          <div>拆分。</div>
        </div>
        <div className="mt-[7px] mx-[4px] h-px bg-[#e0e0e0]" />
        <div className="pl-[11px] h-[32px] flex items-center font-bold text-[14.500px] text-[#2b66a8]">
          <Help /><span className="ml-[8px]">详细信息</span>
        </div>
      </div>

      {/* Floating badge */}
      <div className="absolute left-[1814px] top-[210px] w-[58px] h-[58px] rounded-[3px] bg-[#3a4354] shadow-[0_0_2px_rgba(0,0,0,0.5)] flex items-end justify-center pb-[6px] text-[16px] leading-[24px] text-[#d2dbe6]">13.6%</div>
    </div>
  );
}
